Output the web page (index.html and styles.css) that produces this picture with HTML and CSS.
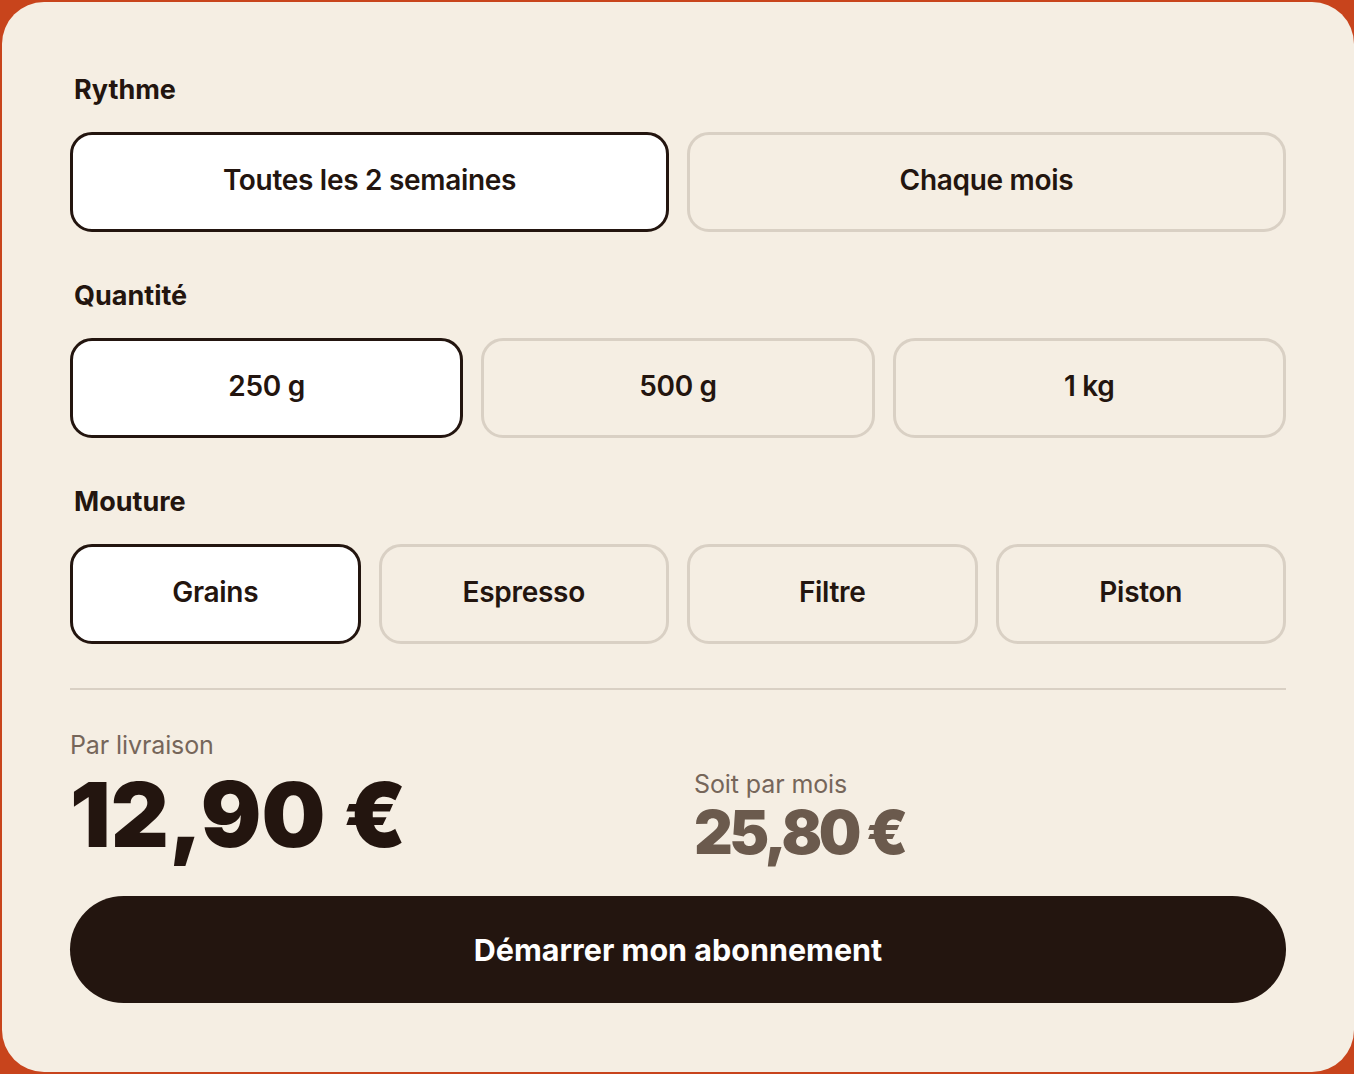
FILE: index.html
```html
<!DOCTYPE html>
<html lang="fr">
<head>
<meta charset="utf-8">
<title>Abonnement</title>
<link rel="stylesheet" href="styles.css">
</head>
<body>
<div class="card">
  <section class="group">
    <h2 class="label">Rythme</h2>
    <div class="options cols-2">
      <button class="opt selected">Toutes les 2 semaines</button>
      <button class="opt">Chaque mois</button>
    </div>
  </section>
  <section class="group">
    <h2 class="label">Quantité</h2>
    <div class="options cols-3">
      <button class="opt selected">250 g</button>
      <button class="opt">500 g</button>
      <button class="opt">1 kg</button>
    </div>
  </section>
  <section class="group">
    <h2 class="label">Mouture</h2>
    <div class="options cols-4">
      <button class="opt selected">Grains</button>
      <button class="opt">Espresso</button>
      <button class="opt">Filtre</button>
      <button class="opt">Piston</button>
    </div>
  </section>
  <hr class="divider">
  <div class="prices">
    <div class="price-col">
      <div class="price-label">Par livraison</div>
      <div class="price-main">12,90 €</div>
    </div>
    <div class="price-col">
      <div class="price-label">Soit par mois</div>
      <div class="price-sub">25,80 €</div>
    </div>
  </div>
  <button class="cta">Démarrer mon abonnement</button>
</div>
</body>
</html>
```

FILE: styles.css
```css
* { box-sizing: border-box; }
html, body { margin: 0; }
body {
  background: #c8441c;
  padding: 2px 0 2px 2px;
  font-family: Inter, "Noto Sans", "Liberation Sans", sans-serif;
  color: #23150f;
  overflow: hidden;
}
.card {
  width: 1352px;
  height: 1070px;
  background: #f5eee3;
  border-radius: 42px;
  padding: 72px 68px 68px 68px;
}
.group { margin-bottom: 48px; }
.group:last-of-type { margin-bottom: 0; }
.label {
  margin: 0 0 26px 4px;
  font-size: 27px;
  line-height: 32px;
  font-weight: 650;
  letter-spacing: 0;
}
.options {
  display: grid;
  gap: 18px;
}
.cols-2 { grid-template-columns: repeat(2, 1fr); }
.cols-3 { grid-template-columns: repeat(3, 1fr); }
.cols-4 { grid-template-columns: repeat(4, 1fr); }
.opt {
  height: 100px;
  border: 3px solid #d9d0c4;
  border-radius: 22px;
  background: transparent;
  font-family: inherit;
  font-size: 28px;
  line-height: 32px;
  font-weight: 600;
  letter-spacing: -0.3px;
  color: #23150f;
  padding: 0 0 4px 0;
}
.opt.selected {
  border-color: #23150f;
  background: #ffffff;
}
.divider {
  border: 0;
  height: 2px;
  background: #d9d0c4;
  margin: 44px 0 0 0;
}
.prices {
  display: grid;
  grid-template-columns: 1fr 1fr;
  gap: 32px;
  align-items: end;
  margin-top: 40px;
}
.price-label {
  font-size: 25px;
  line-height: 30px;
  font-weight: 400;
  color: #76665a;
  letter-spacing: -0.1px;
}
.price-main {
  font-size: 90px;
  line-height: 100px;
  font-weight: 900;
  letter-spacing: 0;
  margin-top: 5px;
  color: #23150f;
}
.price-sub {
  font-size: 60px;
  line-height: 66px;
  font-weight: 900;
  letter-spacing: -3.5px;
  color: #6b5a4d;
}
.cta {
  display: block;
  width: 100%;
  height: 107px;
  margin-top: 31px;
  border: 0;
  border-radius: 54px;
  background: #23150f;
  color: #ffffff;
  font-family: inherit;
  font-size: 30.5px;
  font-weight: 700;
  letter-spacing: 0;
}
```
